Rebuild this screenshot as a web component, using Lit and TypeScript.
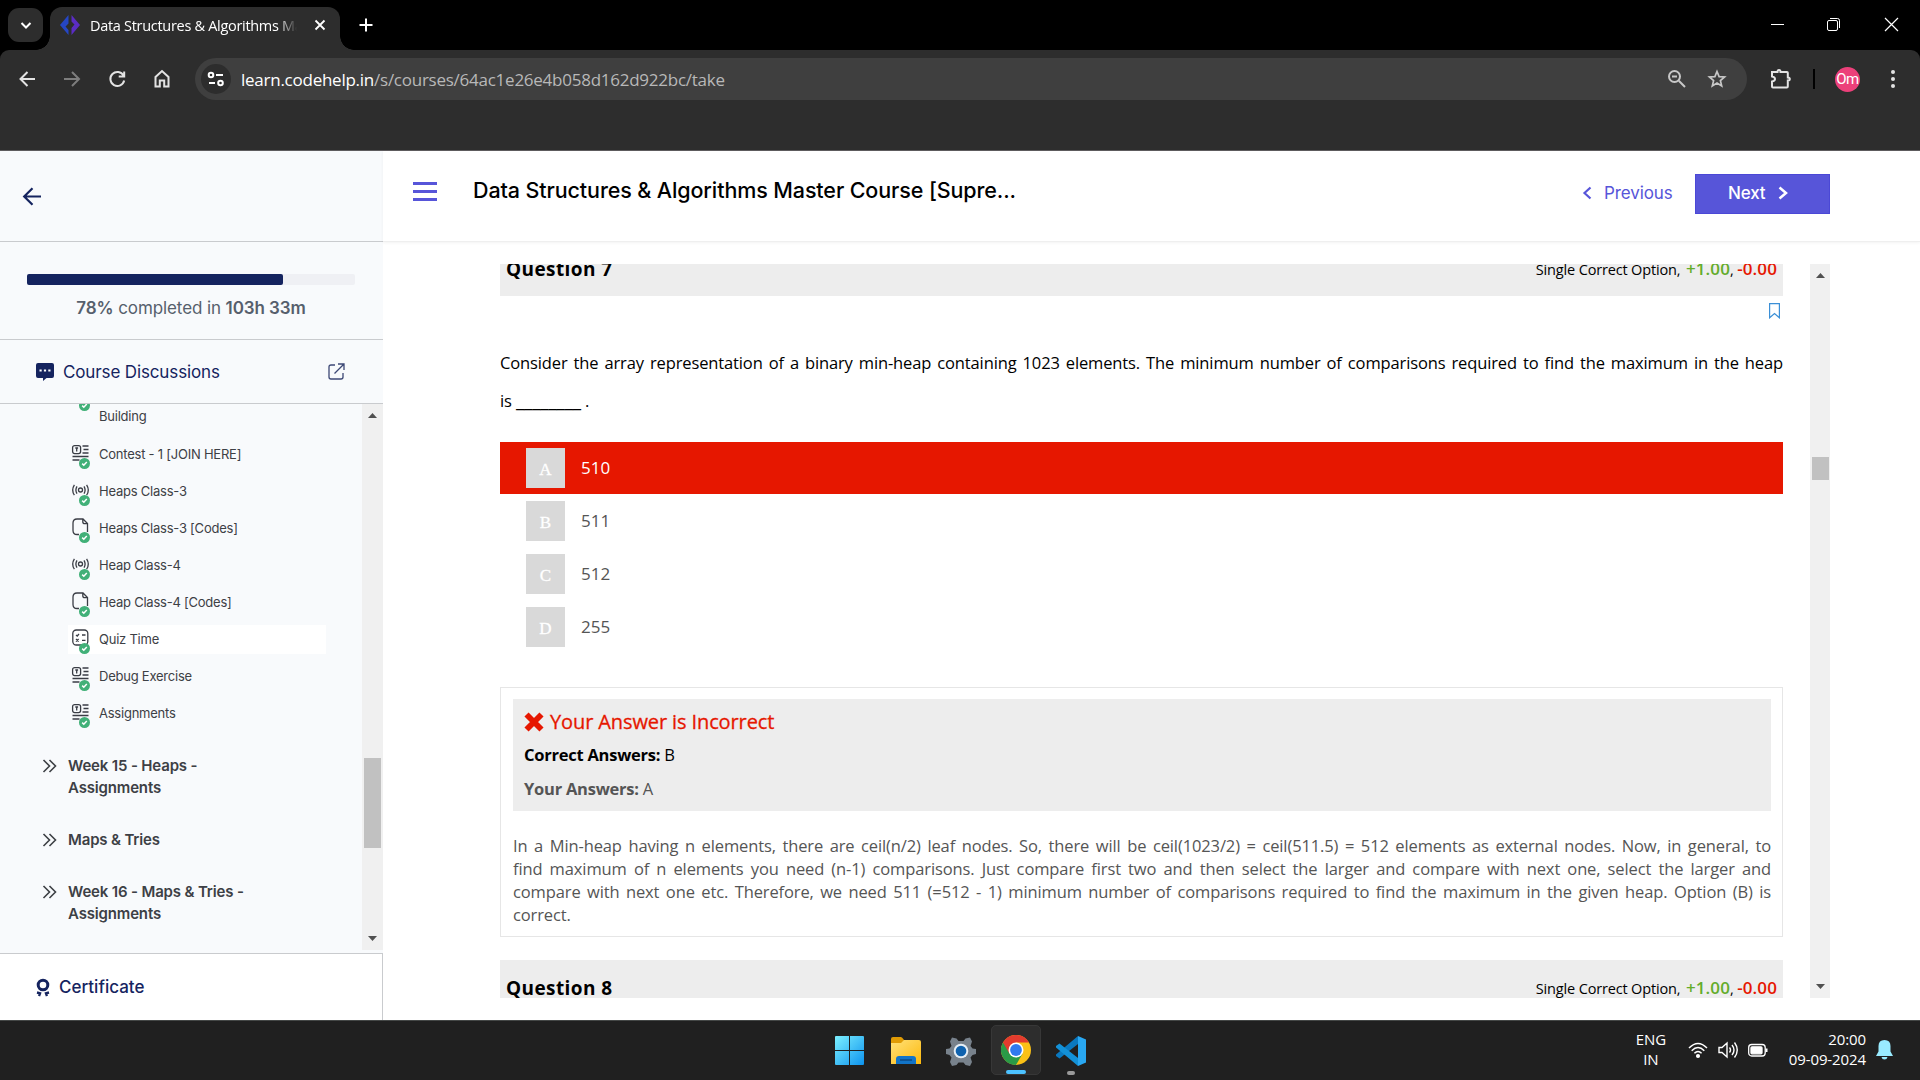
import { LitElement, html, css, svg } from "lit";
import { customElement } from "lit/decorators.js";
import { classMap } from "lit/directives/class-map.js";

type Kind = "article" | "live" | "file" | "quiz";
interface Lesson { kind: Kind; label: string; active?: boolean }

const LESSONS: Lesson[] = [
  { kind: "article", label: "Contest - 1 [JOIN HERE]" },
  { kind: "live", label: "Heaps Class-3" },
  { kind: "file", label: "Heaps Class-3 [Codes]" },
  { kind: "live", label: "Heap Class-4" },
  { kind: "file", label: "Heap Class-4 [Codes]" },
  { kind: "quiz", label: "Quiz Time", active: true },
  { kind: "article", label: "Debug Exercise" },
  { kind: "article", label: "Assignments" },
];

const WEEKS = [
  ["Week 15 - Heaps -", "Assignments"],
  ["Maps & Tries"],
  ["Week 16 - Maps & Tries -", "Assignments"],
];

const OPTIONS = [
  { key: "A", text: "510", wrong: true },
  { key: "B", text: "511", wrong: false },
  { key: "C", text: "512", wrong: false },
  { key: "D", text: "255", wrong: false },
];

const EXPLANATION = [
  "In a Min-heap having n elements, there are ceil(n/2) leaf nodes. So, there will be ceil(1023/2) = ceil(511.5) = 512 elements as external nodes. Now, in general, to",
  "find maximum of n elements you need (n-1) comparisons. Just compare first two and then select the larger and compare with next one, select the larger and",
  "compare with next one etc. Therefore, we need 511 (=512 - 1) minimum number of comparisons required to find the maximum in the given heap. Option (B) is",
  "correct.",
];

const check = svg`<circle cx="13.5" cy="20.5" r="5.5" fill="#41b078"/><path d="M11.2 20.6l1.6 1.6 3-3.2" fill="none" stroke="#fff" stroke-width="1.5"/>`;

const lessonGlyph: Record<Kind, unknown> = {
  article: svg`<rect x="1.6" y="2.6" width="8" height="8" rx="2"/><path d="M4.3 5h2.8M5.7 5v3.4M11.5 3h6M12.5 6.500h5M11.500 10h6M1.500 13.500h16M1.500 17h7"/>`,
  live: svg`<circle cx="9.500" cy="10" r="2"/><path d="M6 6.400q-2.200 3.600 0 7.200M13 6.400q2.200 3.600 0 7.200M3.400 4.800q-3.400 5.200 0 10.400M15.600 4.800q3.400 5.200 0 10.400"/>`,
  file: svg`<path d="M8 17.500H6q-4 0-4-4V6q0-4 4-4h6l4.500 4.500V15M11.800 2v2.700q0 2 2 2h2.700"/>`,
  quiz: svg`<rect x="1.800" y="2" width="15" height="15" rx="3.500"/><path d="M5 7l1.200 1L8 6M11 7h3.500M5 11l2.600 2.600M7.600 11L5 13.600M11 12.300h3.500"/>`,
};

@customElement("browser-chrome")
class BrowserChrome extends LitElement {
  static styles = css`
    :host { display: block; height: 151px; background: #000; font-family: "Open Sans", "Noto Sans", sans-serif; color: #fff; }
    * { box-sizing: border-box; }
    svg { display: block; flex: none; }
    .tabs { height: 50px; display: flex; align-items: flex-start; padding: 7px 0 0 8px; }
    .search { width: 35px; height: 34px; margin-top: 1px; border-radius: 11px; background: #2d2d2d; display: grid; place-items: center; }
    .tab { position: relative; margin-left: 7px; width: 290px; height: 43px; border-radius: 12px 12px 0 0; background: #2d2d2d; display: flex; align-items: center; padding: 0 14px 7px 9px; }
    .tab::before, .tab::after { content: ""; position: absolute; bottom: 0; width: 14px; height: 14px; }
    .tab::before { left: -14px; background: radial-gradient(circle at 0 0, transparent 13.500px, #2d2d2d 14px); }
    .tab::after { right: -14px; background: radial-gradient(circle at 100% 0, transparent 13.500px, #2d2d2d 14px); }
    .label { margin-left: 9px; width: 210px; overflow: hidden; white-space: nowrap; font-size: 14.500px; letter-spacing: -0.300px; -webkit-mask-image: linear-gradient(90deg, #000 188px, transparent 207px); }
    .x { margin-left: 14px; }
    .plus { margin: 9px 0 0 17px; }
    .spacer { flex: 1; }
    .win { display: flex; gap: 42px; margin: 10px 21px 0 0; }
    .bar { height: 100px; border-radius: 9px 9px 0 0; background: #2d2d2d; display: flex; align-items: flex-start; padding: 8px 0 0 16px; }
    .nav { display: flex; gap: 23px; height: 42px; align-items: center; }
    .pill { margin-left: 22px; width: 1552px; height: 42px; border-radius: 21px; background: #3f3f3f; display: flex; align-items: center; padding: 0 20px 0 6px; }
    .tune { width: 30px; height: 30px; border-radius: 50%; background: #2d2d2d; display: grid; place-items: center; }
    .url { margin-left: 10px; font-size: 17px; letter-spacing: -0.250px; color: #b8b8b8; white-space: nowrap; }
    .url b { font-weight: 400; color: #fff; }
    .star { margin-left: 20px; }
    .right { display: flex; align-items: center; height: 42px; }
    .ext { margin-left: 21px; }
    .sep { width: 2px; height: 20px; background: #000; margin-left: 21px; }
    .me { margin-left: 20px; width: 25px; height: 25px; border-radius: 50%; background: #ec407a; font: 15px/25px Roboto, sans-serif; letter-spacing: -0.500px; text-align: center; }
    .dots { margin-left: 30px; }
    .edge { height: 1px; background: #5e5c5e; }
  `;
  render() {
    return html`
      <div class="tabs">
        <div class="search"><svg width="12" height="12" fill="none" stroke="#fff" stroke-width="2"><path d="M1.500 4l4.500 4.500L10.500 4"/></svg></div>
        <div class="tab">
          <svg width="22" height="22" viewBox="0 0 22 22"><path d="M9.500 1L1 11l8.500 10v-5L6.500 12.500l3-3z" fill="#2546c4"/><path d="M12.500 1L21 11l-8.500 10v-7l3-3.500-3-3z" fill="#5b2cc4"/></svg>
          <span class="label">Data Structures &amp; Algorithms Master</span>
          <svg class="x" width="12" height="12" stroke="#fff" stroke-width="1.800"><path d="M1.500 1.500l9 9M10.500 1.500l-9 9"/></svg>
        </div>
        <svg class="plus" width="18" height="18" stroke="#fff" stroke-width="2"><path d="M9 2.500v13M2.500 9h13"/></svg>
        <div class="spacer"></div>
        <div class="win">
          <svg width="15" height="15" stroke="#fff"><path d="M1 7.500h13"/></svg>
          <svg width="15" height="15" fill="none" stroke="#fff"><rect x=".5" y="3.500" width="10" height="10" rx="1.500"/><path d="M3 1.500h7.500q2 0 2 2V11"/></svg>
          <svg width="15" height="15" stroke="#fff" stroke-width="1.200"><path d="M1 1l13 13M14 1L1 14"/></svg>
        </div>
      </div>
      <div class="bar">
        <div class="nav">
          <svg width="22" height="22" fill="none" stroke="#e3e3e3" stroke-width="2"><path d="M19 11H4.500M11.500 4l-7 7 7 7"/></svg>
          <svg width="22" height="22" fill="none" stroke="#7d7d7d" stroke-width="2"><path d="M3 11h14.500M11 4l7 7-7 7"/></svg>
          <svg width="22" height="22" fill="none" stroke="#e3e3e3" stroke-width="2"><path d="M17.500 7.500a7 7 0 1 0 .7 5M18.200 3.500v5h-5.500"/></svg>
          <svg width="22" height="22" fill="none" stroke="#e3e3e3" stroke-width="2"><path d="M4.500 18.500V9l6.500-6 6.500 6v9.500h-4.300V12.500H8.800v6z"/></svg>
        </div>
        <div class="pill">
          <div class="tune"><svg width="18" height="16" fill="none" stroke="#fff" stroke-width="2"><circle cx="4" cy="4" r="2.300"/><path d="M9 4h7M2 12h6"/><circle cx="13.500" cy="12" r="2.300"/></svg></div>
          <span class="url"><b>learn.codehelp.in</b>/s/courses/64ac1e26e4b058d162d922bc/take</span>
          <div class="spacer"></div>
          <svg width="20" height="20" fill="none" stroke="#c7c7c7" stroke-width="2"><circle cx="7.500" cy="7.500" r="5.500"/><path d="M11.800 11.800l6.200 6.200M5 7.500h5"/></svg>
          <svg class="star" width="20" height="20" viewBox="0 0 20 20" fill="none" stroke="#c7c7c7" stroke-width="1.700"><path d="M10 2.500l2.100 5.100 5.500.4-4.200 3.600 1.300 5.400-4.700-2.900-4.700 2.900 1.300-5.400L2.400 8l5.500-.4z"/></svg>
        </div>
        <div class="right">
          <svg class="ext" width="24" height="22" viewBox="0 0 24 22" fill="none" stroke="#e3e3e3" stroke-width="2"><path d="M4 4h5.500q0-2 1.500-2t1.500 2H19q.8 0 .8.800v4.700q2 0 2 1.500t-2 1.500v6q0 1-1 1H5q-1 0-1-1v-5q3-.500 3-2.500T4 8.500z"/></svg>
          <div class="sep"></div>
          <div class="me">Om</div>
          <svg class="dots" width="6" height="20" fill="#e3e3e3"><circle cx="3" cy="3" r="2"/><circle cx="3" cy="10" r="2"/><circle cx="3" cy="17" r="2"/></svg>
        </div>
      </div>
      <div class="edge"></div>`;
  }
}

@customElement("course-sidebar")
class CourseSidebar extends LitElement {
  static styles = css`
    :host { display: flex; flex-direction: column; width: 383px; height: 869px; background: #f8fafc; font-family: Inter, sans-serif; color: #3d4045; }
    * { box-sizing: border-box; }
    svg { display: block; flex: none; }
    .back { height: 91px; border-bottom: 1px solid #c9cbce; padding: 35px 0 0 22px; }
    .progress { height: 98px; border-bottom: 1px solid #c9cbce; padding: 32px 28px 0 27px; }
    .track { height: 11px; border-radius: 2px; background: #eff0f4; }
    .fill { height: 11px; border-radius: 2px; background: #15245f; }
    .caption { margin: 11px 0 0 0; text-align: center; font-size: 17px; line-height: 24px; letter-spacing: -0.100px; color: #565f6c; white-space: nowrap; }
    .caption b { font-weight: 600; }
    .talk { height: 64px; border-bottom: 1px solid #c9cbce; display: flex; align-items: center; padding: 0 38px 0 36px; color: #15245f; font-size: 17px; letter-spacing: -0.130px; }
    .talk span { margin-left: 9px; flex: 1; }
    .body { height: 546px; display: flex; overflow: hidden; }
    .list { flex: 1; padding: 2px 0 0 68px; }
    .row { width: 258px; height: 29px; margin-bottom: 8px; display: flex; align-items: center; padding-left: 3px; font-size: 13px; letter-spacing: -0.230px; white-space: nowrap; }
    .row span { padding-bottom: 2px; }
    .row svg { margin: 3px 8px 0 0; overflow: visible; }
    .row.on { background: #fff; }
    .row.first { margin-top: -4px; height: 30px; }
    .week { display: flex; margin: 0 0 30px -26px; font-size: 15px; line-height: 22px; font-weight: 600; letter-spacing: -0.160px; white-space: nowrap; }
    .week svg { margin: 4px 11px 0 0; }
    .weeks { padding-top: 19px; }
    .scroll { width: 21px; background: #f0f0f0; display: flex; flex-direction: column; align-items: center; padding: 9px 0 9px; }
    .thumb { width: 17px; height: 90px; background: #c1c1c1; margin-top: 340px; margin-bottom: auto; }
    .cert { margin-top: 3px; height: 67px; background: #fff; border-top: 1px solid #c9cbce; border-right: 1px solid #c9cbce; display: flex; align-items: center; padding-left: 35px; color: #15245f; font-size: 17px; font-weight: 500; letter-spacing: 0; }
    .cert span { margin-left: 8px; }
  `;
  private icon(kind: Kind) {
    return html`<svg width="20" height="27" viewBox="0 0 20 27" fill="none" stroke="#3a3d45" stroke-width="1.300">${lessonGlyph[kind]}<g stroke="none">${check}</g></svg>`;
  }
  render() {
    const done = 78;
    return html`
      <div class="back"><svg width="20" height="20" fill="none" stroke="#15245f" stroke-width="2.200"><path d="M19 10.500H2.500M10.500 2.200l-8.300 8.300 8.300 8.300"/></svg></div>
      <div class="progress">
        <div class="track"><div class="fill" style="width:${done}%"></div></div>
        <div class="caption"><b>${done}%</b> completed in <b>103h 33m</b></div>
      </div>
      <div class="talk">
        <svg width="18" height="18"><path d="M2 0h14q2 0 2 2v11q0 2-2 2h-5.500L7 18v-3H2q-2 0-2-2V2q0-2 2-2z" fill="#15245f"/><path d="M3.500 7.500h2.200M7.900 7.500h2.200M12.300 7.500h2.200" stroke="#fff" stroke-width="2"/></svg>
        <span>Course Discussions</span>
        <svg width="17" height="17" fill="none" stroke="#3c4875" stroke-width="1.300"><path d="M7 2H3Q1 2 1 4v10q0 2 2 2h10q2 0 2-2v-4M10 1h6v6M16 1L6.500 10.500"/></svg>
      </div>
      <div class="body">
        <div class="list">
          <div class="row first"><svg width="20" height="27" viewBox="0 0 20 27">
            <g transform="translate(0 -20)">${check}</g></svg><span>Building</span></div>
          ${LESSONS.map(l => html`<div class=${classMap({ row: true, on: !!l.active })}>${this.icon(l.kind)}<span>${l.label}</span></div>`)}
          <div class="weeks">
            ${WEEKS.map(w => html`<div class="week">
              <svg width="15" height="14" fill="none" stroke="#3d4045" stroke-width="1.600"><path d="M1.500 1l6 6-6 6M7.500 1l6 6-6 6"/></svg>
              <div>${w.map(t => html`<div>${t}</div>`)}</div></div>`)}
          </div>
        </div>
        <div class="scroll">
          <svg width="9" height="5" fill="#505050"><path d="M0 5L4.500 0 9 5z"/></svg>
          <div class="thumb"></div>
          <svg width="9" height="5" fill="#505050"><path d="M0 0l4.500 5L9 0z"/></svg>
        </div>
      </div>
      <div class="cert">
        <svg width="16" height="19" viewBox="0 0 16 19" fill="none" stroke="#15245f"><circle cx="8" cy="7" r="4.800" stroke-width="3"/><path d="M2 14.500l3 .8-1 2.700M14 14.500l-3 .8 1 2.700" stroke-width="2.400"/></svg>
        <span>Certificate</span>
      </div>`;
  }
}

@customElement("quiz-panel")
class QuizPanel extends LitElement {
  static styles = css`
    :host { display: block; width: 1537px; height: 869px; background: #fff; color: #000; font-family: "Open Sans", "Noto Sans", sans-serif; }
    * { box-sizing: border-box; }
    svg { display: block; flex: none; }
    header { height: 91px; border-bottom: 1px solid #efefef; box-shadow: 0 1px 3px rgba(0, 0, 0, 0.050); display: flex; font-family: Inter, sans-serif; padding-left: 30px; color: #5755d9; }
    .burger { width: 24px; margin-top: 31px; display: flex; flex-direction: column; gap: 5px; }
    .burger i { height: 3px; background: #5755d9; }
    h1 { margin: 25px 0 0 36px; width: 1109px; font-size: 21.500px; line-height: 28px; font-weight: 500; letter-spacing: -0.110px; color: #000; white-space: nowrap; }
    .prev { display: flex; align-items: center; height: 40px; margin-top: 22px; font-size: 17px; letter-spacing: -0.100px; gap: 12px; width: 113px; }
    .next { width: 135px; height: 40px; margin-top: 23px; background: #5755d9; border: 1px solid #4b48d6; color: #fff; font-size: 17px; font-weight: 500; display: flex; align-items: center; padding: 0 0 2px 32px; gap: 13px; letter-spacing: -0.150px; }
    .view { margin: 22px 0 0 117px; height: 734px; display: flex; overflow: hidden; }
    .page { width: 1283px; }
    .scroll { margin-left: 27px; width: 20px; background: #f0f0f0; display: flex; flex-direction: column; align-items: center; padding: 9px 0; }
    .thumb { width: 17px; height: 23px; background: #c1c1c1; margin: 179px 0 auto 1px; }
    .qhead { height: 56px; background: #ededed; display: flex; justify-content: space-between; align-items: center; padding: 0 6px; flex: none; }
    .qhead.cut { margin-top: -22px; height: 54px; }
    .qhead b { font-size: 19px; font-weight: 700; letter-spacing: 0.400px; }
    .marks { font-size: 14.500px; letter-spacing: -0.160px; white-space: nowrap; line-height: 24px; }
    .marks em { font-style: normal; font-size: 17px; font-weight: 600; color: #63ac2b; letter-spacing: 0.100px; margin-left: 2px; }
    .marks em.neg { color: #e61700; margin-left: 0; }
    .mark { display: flex; justify-content: flex-end; padding: 7px 3px 0 0; }
    .ask { margin-top: 25px; font-size: 16.500px; line-height: 38px; letter-spacing: -0.130px; white-space: nowrap; }
    .blank { font-size: 19px; line-height: 0; letter-spacing: -0.200px; }
    .wide { text-align: justify; text-align-last: justify; }
    .options { margin-top: 22px; }
    .opt { height: 52px; margin-bottom: 1px; display: flex; align-items: center; padding-left: 26px; font-size: 17px; color: #555; }
    .opt span { padding-bottom: 2px; }
    .opt.bad { background: #e61700; color: #fff; }
    .key { width: 39px; height: 40px; background: #d9d9d9; color: #fff; margin-right: 16px; text-align: center; font: 17px/43px "Liberation Serif", serif; -webkit-text-stroke: 0.300px #fff; }
    .result { margin-top: 34px; height: 250px; border: 1px solid #e6e6e6; padding: 11px 11px 0 12px; color: #555; }
    .box { height: 112px; background: #ededed; padding: 7px 0 0 11px; font-size: 16.500px; line-height: 34px; letter-spacing: -0.240px; }
    .bad-title { display: flex; align-items: center; gap: 6px; height: 32px; color: #e61700; font-size: 20px; letter-spacing: -0.110px; -webkit-text-stroke: 0.300px #e61700; }
    .black { color: #000; }
    .why { margin-top: 23px; font-size: 16.500px; line-height: 23px; letter-spacing: -0.120px; white-space: nowrap; }
    .q8 { margin-top: 23px; }
  `;
  private head(n: number, cls: string) {
    return html`<div class="qhead ${cls}"><b>Question ${n}</b><span class="marks">Single Correct Option, <em>+1.00</em>, <em class="neg">-0.00</em></span></div>`;
  }
  render() {
    return html`
      <header>
        <div class="burger"><i></i><i></i><i></i></div>
        <h1>Data Structures &amp; Algorithms Master Course [Supre...</h1>
        <div class="prev"><svg width="10" height="14" fill="none" stroke="#5755d9" stroke-width="2.200"><path d="M8.500 1.500L2.500 7l6 5.500"/></svg>Previous</div>
        <div class="next">Next<svg width="10" height="14" fill="none" stroke="#fff" stroke-width="2.500"><path d="M1.500 1.500L8 7l-6.500 5.500"/></svg></div>
      </header>
      <div class="view">
        <div class="page">
          ${this.head(7, "cut")}
          <div class="mark"><svg width="11" height="16" fill="none" stroke="#3b8fd6" stroke-width="1.200"><path d="M.6.600h9.800v14.200l-4.900-4.300-4.900 4.300z"/></svg></div>
          <div class="ask">
            <div class="wide">Consider the array representation of a binary min-heap containing 1023 elements. The minimum number of comparisons required to find the maximum in the heap</div>
            <div>is <span class="blank">________</span> .</div>
          </div>
          <div class="options">
            ${OPTIONS.map(o => html`<div class=${classMap({ opt: true, bad: o.wrong })}><div class="key">${o.key}</div><span>${o.text}</span></div>`)}
          </div>
          <div class="result">
            <div class="box">
              <div class="bad-title"><svg width="20" height="20" stroke="#e61700" stroke-width="5.800"><path d="M2.500 2.500l15 15M17.500 2.500l-15 15"/></svg>Your Answer is Incorrect</div>
              <div class="black"><b>Correct Answers:</b> B</div>
              <div><b>Your Answers:</b> A</div>
            </div>
            <div class="why">${EXPLANATION.map((t, i) => html`<div class=${classMap({ wide: i < 3 })}>${t}</div>`)}</div>
          </div>
          ${this.head(8, "q8")}
        </div>
        <div class="scroll">
          <svg width="9" height="5" fill="#505050"><path d="M0 5L4.500 0 9 5z"/></svg>
          <div class="thumb"></div>
          <svg width="9" height="5" fill="#505050"><path d="M0 0l4.500 5L9 0z"/></svg>
        </div>
      </div>`;
  }
}

@customElement("task-bar")
class TaskBar extends LitElement {
  static styles = css`
    :host { display: flex; align-items: flex-start; height: 60px; box-sizing: border-box; background: #202020; border-top: 1px solid #444746; color: #fff; font: 15px/20px "Open Sans", "Noto Sans", sans-serif; letter-spacing: -0.100px; padding-left: 835px; }
    * { box-sizing: border-box; }
    svg { display: block; flex: none; }
    .apps { display: flex; align-items: flex-start; padding-top: 15px; gap: 26px; width: 300px; flex: none; }
    .folder { margin: 0 -1px 0 1px; }
    .chrome { position: relative; width: 50px; height: 50px; margin: -11px -11px 0 -11px; border: 1px solid #373737; border-radius: 5px; background: #2d2d2d; padding: 9px; }
    .run { position: absolute; height: 4px; border-radius: 2px; background: #4cc2ff; width: 20px; left: 14px; bottom: 0; }
    .code { position: relative; }
    .idle { position: absolute; height: 4px; border-radius: 2px; background: #9a9a9a; width: 8px; left: 11px; bottom: -9px; }
    .tray { display: flex; align-items: center; margin-left: auto; padding: 8px 27px 0 0; height: 50px; }
    .lang { text-align: center; }
    .icons { display: flex; gap: 10px; margin: 0 20px 0 22px; }
    .time { text-align: right; margin-right: 10px; width: 78px; white-space: nowrap; display: flex; flex-direction: column; align-items: flex-end; }
    .lang, .time { margin-top: -2px; }
  `;
  render() {
    return html`
      <div class="apps">
        <svg width="29" height="29"><defs><linearGradient id="w" x1="0" y1="0" x2="1" y2="1"><stop stop-color="#7cf0ff"/><stop offset="1" stop-color="#0d93ee"/></linearGradient></defs><path d="M1 0h13v14H0V1q0-1 1-1zM15 0h13q1 0 1 1v13H15zM0 15h14v14H1q-1 0-1-1zM15 15h14v13q0 1-1 1H15z" fill="url(#w)"/></svg>
        <svg class="folder" width="30" height="29"><defs><linearGradient id="f" x1="0" y1="0" x2="1" y2="1"><stop stop-color="#ffe17a"/><stop offset="1" stop-color="#fdb90c"/></linearGradient></defs><path d="M0 14V3q0-2 2-2h8q1 0 3 3v10z" fill="#e09b05"/><path d="M0 7h10l3-3h15q2 0 2 2v22H0z" fill="url(#f)"/><path d="M5 28v-5q0-3 3-3h14q3 0 3 3v5z" fill="#1274c8"/><path d="M9 24h12" stroke="#0b4a87" stroke-width="1.500"/></svg>
        <svg width="30" height="30" viewBox="0 0 30 30"><path d="M6 1.500l4.500 1 2 2.500h5l2-2.500 4.500-1 2 4-1.500 4.500 2 2.500 3.500.5v5l-3.500 1-2 2.500 1.500 4.500-2 4-4.500-1-2-2.500h-5l-2 2.500-4.500 1-2-4 1.500-4.500-2-2.500L0 18v-5l3.500-.5 2-2.500L4 5.500z" fill="#78828c"/><circle cx="15" cy="15" r="7.300" fill="#e6eef5"/><circle cx="15" cy="15" r="5.300" fill="#0f62ae"/></svg>
        <div class="chrome">
          <svg width="30" height="30" viewBox="0 0 30 30"><circle cx="15" cy="15" r="15" fill="#fbc116"/><path d="M15 15L2 7.500a15 15 0 0 0 13 22.500l6.500-11.200z" fill="#2a9a47"/><path d="M15 15v-7.500H28A15 15 0 0 0 2 7.500l6.500 11.200z" fill="#e33b2e"/><circle cx="15" cy="15" r="7.500" fill="#fff"/><circle cx="15" cy="15" r="5.900" fill="#3079ee"/></svg>
          <div class="run"></div>
        </div>
        <div class="code">
          <svg width="30" height="30" viewBox="0 0 30 30"><path d="M22 0v8L3.500 22.500 0 20v-1.500z" fill="#0a78bf"/><path d="M22 30v-8L3.500 7.500 0 10v1.500z" fill="#1391d8"/><path d="M22 0l8 3.500v23L22 30z" fill="#29a8f2"/></svg>
          <div class="idle"></div>
        </div>
      </div>
      <div class="tray">
        <div class="lang">ENG<br>IN</div>
        <div class="icons">
          <svg width="20" height="18" fill="none" stroke="#fff" stroke-width="1.500"><path d="M1 7q9-9 18 0M3.700 9.700q6.300-6.300 12.600 0M6.400 12.300q3.600-3.600 7.200 0"/><circle cx="10" cy="15" r="1.300" fill="#fff"/></svg>
          <svg width="20" height="18" fill="none" stroke="#fff" stroke-width="1.400"><path d="M1 6.500h3L9 2v14l-5-4.500H1zM11.500 6.500q2 2.500 0 5M14 4q4 5 0 10M16.500 1.500q5.500 7.500 0 15"/></svg>
          <svg width="20" height="18" fill="none" stroke="#fff" stroke-width="1.300"><rect x=".7" y="3.500" width="16.500" height="11.500" rx="3"/><rect x="3" y="5.800" width="11" height="7" rx="1" fill="#fff"/><path d="M18.500 7.500v3.500" stroke-width="2"/></svg>
        </div>
        <div class="time"><span>20:00</span><span>09-09-2024</span></div>
        <svg width="17" height="20" fill="#99ebff"><path d="M8.500 0q6 0 6 6v5.500L17 16H0l2.500-4.500V6q0-6 6-6zM5.500 17h6q-.5 2.500-3 2.500t-3-2.500z"/></svg>
      </div>`;
  }
}

@customElement("app-root")
class AppRoot extends LitElement {
  static styles = css`
    :host { display: block; width: 1920px; height: 1080px; overflow: hidden; background: #fff; }
    .main { display: flex; height: 869px; }
  `;
  render() {
    return html`<browser-chrome></browser-chrome>
      <div class="main"><course-sidebar></course-sidebar><quiz-panel></quiz-panel></div>
      <task-bar></task-bar>`;
  }
}
